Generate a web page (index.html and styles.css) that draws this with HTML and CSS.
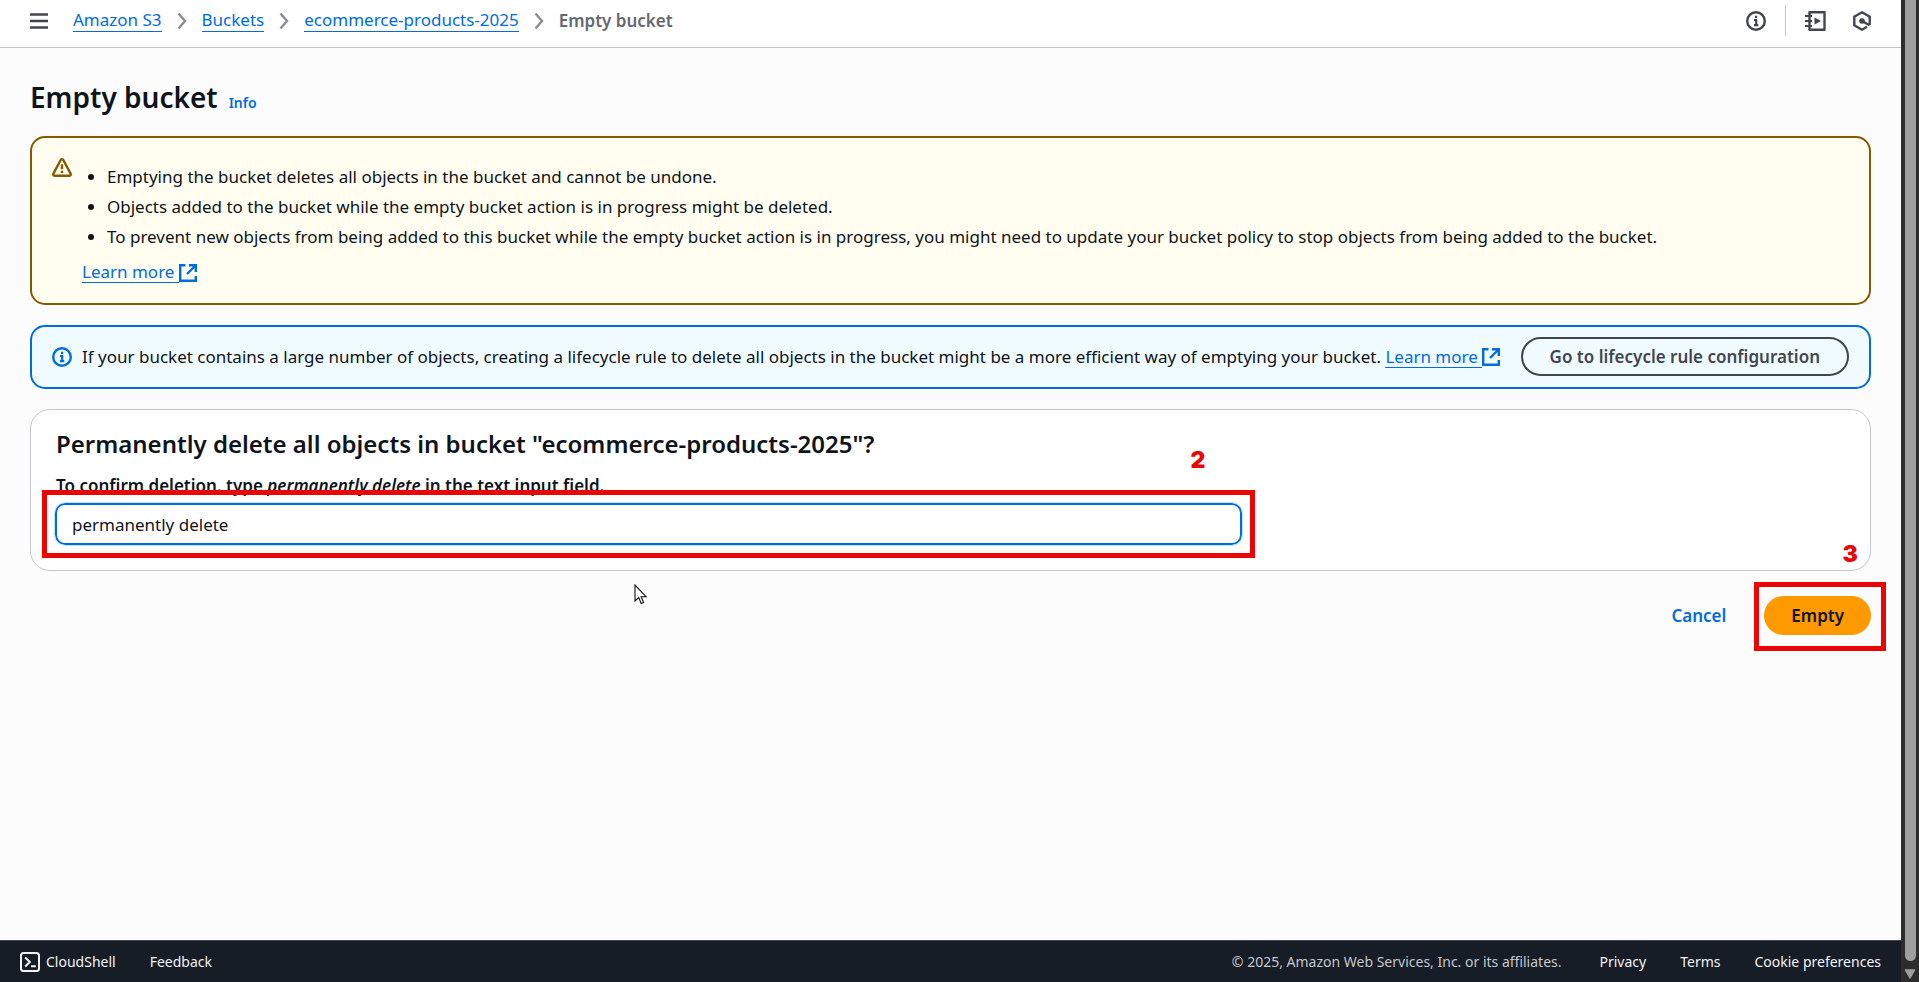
FILE: index.html
```html
<!DOCTYPE html>
<html lang="en">
<head>
<meta charset="utf-8">
<title>Empty bucket</title>
<link rel="stylesheet" href="styles.css">
</head>
<body>
<div class="app">
  <div class="page">
    <header class="topbar">
      <button class="icon-button" type="button" aria-label="Open navigation">
        <svg width="18" height="18" viewBox="0 0 18 18"><path d="M0 2.500h18M0 9h18M0 15.500h18" fill="none" stroke="#424650" stroke-width="2.400"/></svg>
      </button>
      <nav class="crumbs" aria-label="Breadcrumbs">
        <a class="link" href="#">Amazon S3</a>
        <svg class="chevron" width="10" height="16" viewBox="0 0 10 16"><path d="M1.500 0.500l6.500 7.500-6.500 7.500"/></svg>
        <a class="link" href="#">Buckets</a>
        <svg class="chevron" width="10" height="16" viewBox="0 0 10 16"><path d="M1.500 0.500l6.500 7.500-6.500 7.500"/></svg>
        <a class="link" href="#">ecommerce-products-2025</a>
        <svg class="chevron" width="10" height="16" viewBox="0 0 10 16"><path d="M1.500 0.500l6.500 7.500-6.500 7.500"/></svg>
        <span class="current">Empty bucket</span>
      </nav>
      <div class="tools">
        <button class="icon-button" type="button" aria-label="Info">
          <svg width="20" height="20" viewBox="0 0 20 20" fill="none" stroke="#424650" stroke-width="2.400"><circle cx="10" cy="10" r="8.800"/><path d="M8 9h2.200v5.500M8 14.200h4.300M9 5.900h2.200" stroke-width="2.200"/></svg>
        </button>
        <span class="divider"></span>
        <button class="icon-button" type="button" aria-label="Tutorials">
          <svg width="21" height="20" viewBox="0 0 21 20" fill="none" stroke="#424650" stroke-width="2.400" stroke-linejoin="round"><path d="M4.500 1.200h15v17.600h-15z"/><path d="M0 5h7M0 10h7M0 15h7" stroke-width="2.200"/><path d="M9.500 6.500v7l6.500-3.500z" fill="#424650" stroke="none"/></svg>
        </button>
        <button class="icon-button" type="button" aria-label="Amazon Q">
          <svg width="18" height="20" viewBox="0 0 18 20" fill="none" stroke="#424650" stroke-width="2.400"><path d="M16.700 14V5.700L9 1.300 1.300 5.700v8.600L9 18.700l5-2.900"/><path d="M9 10l7.500 4.200"/><circle cx="9" cy="10" r="2.800" fill="#424650" stroke="none"/></svg>
        </button>
      </div>
    </header>

    <main class="content">
      <div class="title-row">
        <h1>Empty bucket</h1>
        <a class="info-link" href="#">Info</a>
      </div>

      <section class="alert alert-warning">
        <svg class="alert-icon" width="20" height="19" viewBox="0 0 20 19" fill="none" stroke="#855900" stroke-width="2.400" stroke-linejoin="round"><path d="M8.700 2L1.400 15.600q-.7 2 1.200 2.100h14.800q1.900-.1 1.200-2.100L11.300 2q-1.300-1.600-2.600 0z"/><path d="M10 6.300v5M10 12.700v2.400"/></svg>
        <div class="alert-body">
          <ul>
            <li>Emptying the bucket deletes all objects in the bucket and cannot be undone.</li>
            <li>Objects added to the bucket while the empty bucket action is in progress might be deleted.</li>
            <li>To prevent new objects from being added to this bucket while the empty bucket action is in progress, you might need to update your bucket policy to stop objects from being added to the bucket.</li>
          </ul>
          <a class="external" href="#"><span class="link">Learn more&nbsp;</span><svg width="18" height="18" viewBox="0 0 18 18" fill="none" stroke="#006ce0" stroke-width="2.400"><path d="M6.500 1.200H1.200v15.600h15.600V12"/><path d="M10 1.200h6.800V8M16.500 1.500L8 10"/></svg></a>
        </div>
      </section>

      <section class="alert alert-info">
        <svg class="alert-icon" width="20" height="20" viewBox="0 0 20 20" fill="none" stroke="#006ce0" stroke-width="2.400"><circle cx="10" cy="10" r="8.800"/><path d="M8 9h2.200v5.500M8 14.200h4.300M9 5.900h2.200" stroke-width="2.200"/></svg>
        <p class="alert-text">If your bucket contains a large number of objects, creating a lifecycle rule to delete all objects in the bucket might be a more efficient way of emptying your bucket. <a class="external" href="#"><span class="link">Learn more&nbsp;</span><svg width="18" height="18" viewBox="0 0 18 18" fill="none" stroke="#006ce0" stroke-width="2.400"><path d="M6.500 1.200H1.200v15.600h15.600V12"/><path d="M10 1.200h6.800V8M16.500 1.500L8 10"/></svg></a></p>
        <button class="button button-normal" type="button">Go to lifecycle rule configuration</button>
      </section>

      <section class="card">
        <h2>Permanently delete all objects in bucket "ecommerce-products-2025"?</h2>
        <label for="confirm">To confirm deletion, type <em>permanently delete</em> in the text input field.</label>
        <div class="field">
          <input id="confirm" type="text" value="permanently delete">
          <span class="marker marker-field"><b class="marker-number">2</b></span>
        </div>
      </section>

      <div class="actions">
        <button class="button button-link" type="button">Cancel</button>
        <div class="primary">
          <button class="button button-primary" type="button">Empty</button>
          <span class="marker marker-button"><b class="marker-number">3</b></span>
        </div>
      </div>
    </main>

    <footer class="footer">
      <a class="shell" href="#"><svg width="20" height="20" viewBox="0 0 20 20" fill="none" stroke="#f3f3f7" stroke-width="2"><rect x="1" y="1" width="18" height="18" rx="2.500"/><path d="M5.200 5.500L9.800 10l-4.600 4.500M11 14.200h4.800"/></svg>CloudShell</a>
      <a href="#">Feedback</a>
      <span class="copyright">© 2025, Amazon Web Services, Inc. or its affiliates.</span>
      <a href="#">Privacy</a>
      <a href="#">Terms</a>
      <a href="#">Cookie preferences</a>
    </footer>
  </div>
  <div class="scrollbar"><span class="thumb"></span><svg width="12" height="10" viewBox="0 0 12 10"><path d="M1.500 1h9L6 9z" fill="#9f9f9f" stroke="#9f9f9f" stroke-width="1.500" stroke-linejoin="round"/></svg></div>
  <svg class="pointer" width="14" height="21" viewBox="0 0 14 21"><path d="M1 1v16l3.700-3.500 2.500 6 2.400-1-2.500-5.800h5z" fill="#fff" stroke="#111" stroke-width="1.100"/></svg>
</div>
</body>
</html>
```
FILE: styles.css
```css
* { box-sizing: border-box; }
body {
  margin: 0;
  font: 17px/30px "Noto Sans", "Open Sans", sans-serif;
  color: #0f141a;
  background: #fcfcfd;
}
h1, h2, p, ul { margin: 0; }
button, input { font: inherit; }
svg { display: block; flex: none; }
a { color: #006ce0; text-decoration: none; }

.app { position: relative; display: flex; min-height: 100vh; }
.page { flex: 1; display: flex; flex-direction: column; min-width: 0; }

.topbar {
  display: flex;
  align-items: center;
  height: 48px;
  padding: 0 30px 6px;
  background: #fff;
  border-bottom: 1px solid #c6c6cd;
}
.icon-button { padding: 0; border: 0; background: none; }
.crumbs { display: flex; align-items: center; gap: 15px; margin-left: 25px; line-height: 22px; }
.link { border-bottom: 1px solid #006ce0; }
.chevron path { fill: none; stroke: #8c8c94; stroke-width: 2.4; }
.current { font-weight: 600; color: #656871; }
.tools { display: flex; align-items: center; gap: 19px; margin-left: auto; }
.tools .icon-button:last-child { margin-left: 8px; }
.divider { width: 1px; height: 31px; background: #c6c6cd; }

.content { flex: 1; padding: 30px; }
.title-row { display: flex; align-items: baseline; gap: 11px; margin-bottom: 20px; }
h1 { font-size: 28px; font-weight: 600; line-height: 38px; }
.info-link { font-size: 14px; font-weight: 600; line-height: 20px; }

.alert {
  display: flex;
  gap: 10px;
  padding: 10px 20px;
  margin-bottom: 20px;
  border: 2px solid;
  border-radius: 15px;
}
.alert-warning { background: #fffef0; border-color: #855900; padding-bottom: 16px; }
.alert-warning .alert-icon { margin-top: 10px; }
.alert-body ul { padding: 14px 0 5px 25px; }
.alert-info { background: #f0fbff; border-color: #006ce0; align-items: center; padding-bottom: 11px; }
.alert-text { flex: 1; white-space: nowrap; }
.external { display: inline-flex; align-items: center; line-height: 20px; }

.button {
  height: 39px;
  padding: 0 25px;
  border: 2px solid transparent;
  border-radius: 20px;
  font-weight: 600;
  line-height: 20px;
  background: none;
}
.button-normal { padding: 0 27px; color: #424650; border-color: #424650; }
.button-link { color: #006ce0; }
.button-primary { color: #0f141a; background: #ff9900; }

.card {
  height: 162px;
  padding: 19px 24px;
  border: 1px solid #c6c6cd;
  border-radius: 20px;
  background: #fff;
}
h2 { font-size: 24px; font-weight: 600; line-height: 30px; margin: 0 1px 14px; }
label { display: block; font-weight: 600; line-height: 25px; margin: 0 1px 5px; }
.field { position: relative; width: 66.3%; }
input {
  display: block;
  width: 100%;
  height: 42px;
  padding: 0 15px;
  border: 2px solid #006ce0;
  border-radius: 10px;
  color: #0f141a;
  background: #fff;
  outline: 1px solid #b8e7ff;
}

.actions { display: flex; justify-content: flex-end; gap: 11px; margin-top: 25px; }
.primary { position: relative; }

.marker { position: absolute; border: 5px solid #eb0606; pointer-events: none; }
.marker-field { inset: -13px; }
.marker-button { inset: -14px -15px -16px -10px; }
.marker-number { position: absolute; font: 900 23px/24px Inter, sans-serif; color: #eb0606; }
.marker-field .marker-number { right: 45px; top: -47px; }
.marker-button .marker-number { right: 23px; top: -45px; }

.footer {
  display: flex;
  align-items: center;
  gap: 34px;
  height: 42px;
  padding: 0 20px;
  font-size: 14px;
  background: #161d26;
  border-top: 1px solid #424650;
}
.footer a { color: #f3f3f7; }
.footer .shell { display: flex; align-items: center; gap: 6px; }
.copyright { margin-left: auto; margin-right: 4px; color: #c6c6cd; }

.scrollbar {
  display: flex;
  flex-direction: column;
  align-items: center;
  width: 18px;
  padding-bottom: 3px;
  background: #2c2c2c;
}
.thumb { flex: 1; width: 11px; margin-bottom: 8px; background: #9f9f9f; border-radius: 0 0 6px 6px; }
.pointer { position: absolute; left: 634px; top: 584px; }
```
